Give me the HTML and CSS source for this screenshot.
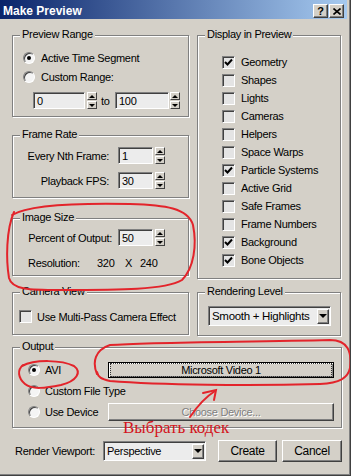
FILE: index.html
```html
<!DOCTYPE html>
<html lang="ru">
<head>
    <meta charset="UTF-8">
    <meta name="viewport" content="width=device-width, initial-scale=1.0">
    <title>Make Preview</title>
    <link rel="stylesheet" href="styles.css">
</head>
<body>
    <div class="window">
        <div class="titlebar">
            <span class="title">Make Preview</span>
            <div class="title-buttons">
                <span class="tbtn">?</span>
                <span class="tbtn">
                    <svg width="8" height="7" viewBox="0 0 8 7"><path d="M0.5 0.5 L7.5 6.5 M7.5 0.5 L0.5 6.5" stroke="#000" stroke-width="1.6" fill="none"/></svg>
                </span>
            </div>
        </div>

        <div class="content">
            <div class="columns">
                <div class="column">
                    <div class="group preview-range">
                        <span class="group-title">Preview Range</span>
                        <div class="radio-row pr-first"><span class="radio checked"></span>Active Time Segment</div>
                        <div class="radio-row"><span class="radio"></span>Custom Range:</div>
                        <div class="range-row">
                            <span class="field range-from">0</span>
                            <span class="spinner"><i class="spin up"></i><i class="spin down"></i></span>
                            <span class="to">to</span>
                            <span class="field range-to">100</span>
                            <span class="spinner"><i class="spin up"></i><i class="spin down"></i></span>
                        </div>
                    </div>

                    <div class="group frame-rate">
                        <span class="group-title">Frame Rate</span>
                        <div class="spin-row fr-first">
                            <span class="spin-label">Every Nth Frame:</span>
                            <span class="field small">1</span>
                            <span class="spinner"><i class="spin up"></i><i class="spin down"></i></span>
                        </div>
                        <div class="spin-row fr-second">
                            <span class="spin-label">Playback FPS:</span>
                            <span class="field small">30</span>
                            <span class="spinner"><i class="spin up"></i><i class="spin down"></i></span>
                        </div>
                    </div>

                    <div class="group image-size">
                        <span class="group-title">Image Size</span>
                        <div class="spin-row is-first">
                            <span class="spin-label wide">Percent of Output:</span>
                            <span class="field small">50</span>
                            <span class="spinner"><i class="spin up"></i><i class="spin down"></i></span>
                        </div>
                        <div class="res-row">
                            <span class="res-label">Resolution:</span>
                            <span class="res-w">320</span>
                            <span class="res-x">X</span>
                            <span>240</span>
                        </div>
                    </div>

                    <div class="group camera-view">
                        <span class="group-title">Camera View</span>
                        <div class="check-row cv-row"><span class="check"></span>Use Multi-Pass Camera Effect</div>
                    </div>
                </div>

                <div class="column">
                    <div class="group display">
                        <span class="group-title">Display in Preview</span>
                        <div class="check-list">
                            <div class="check-row"><span class="check checked"><svg width="9" height="9" viewBox="0 0 9 9"><path d="M1 4 L3.5 6.5 L8 1.5" stroke="#000" stroke-width="2" fill="none"/></svg></span>Geometry</div>
                            <div class="check-row"><span class="check"></span>Shapes</div>
                            <div class="check-row"><span class="check"></span>Lights</div>
                            <div class="check-row"><span class="check"></span>Cameras</div>
                            <div class="check-row"><span class="check"></span>Helpers</div>
                            <div class="check-row"><span class="check"></span>Space Warps</div>
                            <div class="check-row"><span class="check checked"><svg width="9" height="9" viewBox="0 0 9 9"><path d="M1 4 L3.5 6.5 L8 1.5" stroke="#000" stroke-width="2" fill="none"/></svg></span>Particle Systems</div>
                            <div class="check-row"><span class="check"></span>Active Grid</div>
                            <div class="check-row"><span class="check"></span>Safe Frames</div>
                            <div class="check-row"><span class="check"></span>Frame Numbers</div>
                            <div class="check-row"><span class="check checked"><svg width="9" height="9" viewBox="0 0 9 9"><path d="M1 4 L3.5 6.5 L8 1.5" stroke="#000" stroke-width="2" fill="none"/></svg></span>Background</div>
                            <div class="check-row"><span class="check checked"><svg width="9" height="9" viewBox="0 0 9 9"><path d="M1 4 L3.5 6.5 L8 1.5" stroke="#000" stroke-width="2" fill="none"/></svg></span>Bone Objects</div>
                        </div>
                    </div>

                    <div class="group rendering">
                        <span class="group-title">Rendering Level</span>
                        <div class="select level-select">
                            <span class="select-text">Smooth + Highlights</span>
                            <span class="select-arrow"><i class="tri"></i></span>
                        </div>
                    </div>
                </div>
            </div>

            <div class="group output">
                <span class="group-title">Output</span>
                <div class="out-row out-first">
                    <span class="out-choice"><span class="radio checked"></span>AVI</span>
                    <span class="btn default"><span class="focus">Microsoft Video 1</span></span>
                </div>
                <div class="out-row out-second">
                    <span class="out-choice"><span class="radio"></span>Custom File Type</span>
                </div>
                <div class="out-row out-third">
                    <span class="out-choice"><span class="radio"></span>Use Device</span>
                    <span class="btn disabled choose">Choose Device...</span>
                </div>
            </div>

            <div class="bottom-row">
                <span class="viewport-label">Render Viewport:</span>
                <div class="select viewport-select">
                    <span class="select-text">Perspective</span>
                    <span class="select-arrow"><i class="tri"></i></span>
                </div>
                <span class="btn action create">Create</span>
                <span class="btn action cancel">Cancel</span>
            </div>
        </div>

        <svg class="marks" width="351" height="476" viewBox="0 0 351 476">
            <g fill="none" stroke="#e3242b" stroke-width="2" stroke-linecap="round">
                <path d="M12 215 C30 204 80 203 130 204 C165 205 188 208 193 225 C197 245 194 268 182 280 C165 290 120 290 60 290 C30 290 12 290 9 278 C6 260 6 230 14 212"/>
                <path d="M22 366 C35 359 62 360 74 366 C82 372 77 381 61 385 C46 388 32 390 25 384 C18 378 17 370 23 365"/>
                <path d="M97 374 C92 362 95 350 110 345 C150 342 250 342 330 340 C348 340 352 352 350 368 C348 378 340 383 320 384 C250 386 160 385 110 381 C101 379 98 377 97 372"/>
                <path d="M190 417 C196 408 204 398 215 391"/>
                <path d="M203 393 L216 390 L214 400"/>
            </g>
        </svg>
        <span class="note">Выбрать кодек</span>
    </div>
</body>
</html>
```

FILE: styles.css
```css
* {
    box-sizing: border-box;
}

body {
    margin: 0;
    background-color: #d4d0c8;
    font-family: "Liberation Sans", Arial, sans-serif;
    font-size: 11px;
    letter-spacing: -0.3px;
    color: #000;
    white-space: nowrap;
}

.window {
    position: relative;
    width: 351px;
    height: 476px;
    background-color: #d4d0c8;
    border-right: 1px solid #404040;
    border-bottom: 1px solid #404040;
    box-shadow: inset -1px -1px #808080;
    overflow: hidden;
}

/* title bar */

.titlebar {
    display: flex;
    justify-content: space-between;
    height: 19px;
    margin-right: 3px;
    padding: 0 3px 0 3px;
    background: linear-gradient(to right, #0a246a, #a6caf0);
}

.title {
    margin-top: 4px;
    color: #fff;
    font-size: 12px;
    font-weight: bold;
    line-height: 14px;
    letter-spacing: 0;
}

.title-buttons {
    display: flex;
    gap: 1px;
    margin-top: 4px;
}

.tbtn {
    display: flex;
    align-items: center;
    justify-content: center;
    width: 15px;
    height: 14px;
    background-color: #d4d0c8;
    border-top: 1px solid #fff;
    border-left: 1px solid #fff;
    border-right: 1px solid #404040;
    border-bottom: 1px solid #404040;
    box-shadow: inset -1px -1px #808080;
    font-size: 11px;
    font-weight: bold;
    line-height: 11px;
    letter-spacing: 0;
}

/* layout */

.content {
    padding: 16px 8px 0 12px;
}

.columns {
    display: grid;
    grid-template-columns: 177px 144px;
    column-gap: 8px;
    align-items: start;
}

.column {
    display: flex;
    flex-direction: column;
}

.group {
    border: 1px solid #808080;
    box-shadow: inset 1px 1px #fff, 1px 1px #fff;
}

.group-title {
    display: block;
    width: fit-content;
    margin: -8px 0 0 7px;
    padding: 0 2px;
    line-height: 13px;
    background-color: #d4d0c8;
}

.preview-range { height: 82px; }
.frame-rate { height: 63px; margin-top: 18px; }
.image-size { height: 58px; margin-top: 20px; }
.camera-view { height: 43px; margin-top: 16px; }
.display { height: 244px; }
.rendering { height: 44px; margin-top: 13px; }
.output { height: 81px; margin-top: 11px; }

/* radios and checkboxes */

.radio-row {
    display: flex;
    align-items: center;
    height: 19px;
    padding-left: 10px;
}

.pr-first {
    margin-top: 7px;
}

.radio {
    display: flex;
    align-items: center;
    justify-content: center;
    flex: none;
    width: 12px;
    height: 12px;
    margin-right: 6px;
    border-radius: 50%;
    border: 1px solid;
    border-color: #808080 #fff #fff #808080;
    background-color: #f4f4f4;
    box-shadow: inset 1px 1px #404040;
}

.radio.checked::after {
    content: "";
    width: 4px;
    height: 4px;
    border-radius: 50%;
    background-color: #000;
}

.check {
    display: flex;
    align-items: center;
    justify-content: center;
    flex: none;
    width: 13px;
    height: 13px;
    margin-right: 6px;
    border-top: 1px solid #808080;
    border-left: 1px solid #808080;
    border-right: 1px solid #fff;
    border-bottom: 1px solid #fff;
    background-color: #e4e4e4;
    box-shadow: inset 1px 1px #404040;
}

.check-row {
    display: flex;
    align-items: center;
    height: 18px;
}

.check-list {
    margin-top: 12px;
    padding-left: 24px;
}

.cv-row {
    height: 17px;
    margin-top: 10px;
    padding-left: 6px;
}

.cv-row .check {
    margin-right: 5px;
}

/* fields and spinners */

.field {
    display: flex;
    align-items: center;
    height: 17px;
    padding-left: 3px;
    background-color: #ececec;
    border-top: 1px solid #808080;
    border-left: 1px solid #808080;
    border-right: 1px solid #fff;
    border-bottom: 1px solid #fff;
    box-shadow: inset 1px 1px #404040;
}

.spinner {
    display: flex;
    flex-direction: column;
    gap: 1px;
    width: 10px;
    height: 17px;
}

.spin {
    display: flex;
    align-items: center;
    justify-content: center;
    flex: 1;
    background-color: #d4d0c8;
    border-top: 1px solid #fff;
    border-left: 1px solid #fff;
    border-right: 1px solid #404040;
    border-bottom: 1px solid #404040;
}

.spin::after {
    content: "";
    border-left: 3px solid transparent;
    border-right: 3px solid transparent;
}

.spin.up::after {
    border-bottom: 3px solid #000;
}

.spin.down::after {
    border-top: 3px solid #000;
}

.range-row {
    display: flex;
    align-items: center;
    margin-top: 6px;
    padding-left: 20px;
}

.range-from {
    width: 52px;
    margin-right: 2px;
}

.to {
    width: 14px;
    margin-left: 4px;
}

.range-to {
    width: 54px;
    margin-right: 1px;
}

.spin-row {
    display: flex;
    align-items: center;
    height: 17px;
}

.spin-label {
    width: 96px;
    margin-right: 9px;
    text-align: right;
}

.spin-label.wide {
    width: 99px;
    margin-right: 6px;
}

.field.small {
    width: 35px;
    margin-right: 2px;
}

.fr-first { margin-top: 6px; }
.fr-second { margin-top: 8px; }
.is-first { margin-top: 5px; }

.res-row {
    display: flex;
    align-items: center;
    height: 17px;
    margin-top: 8px;
    padding-left: 15px;
}

.res-label { width: 69px; }
.res-w { width: 28px; }
.res-x { width: 15px; }

/* dropdowns */

.select {
    display: flex;
    align-items: center;
    justify-content: space-between;
    height: 20px;
    padding: 0 1px 0 3px;
    background-color: #ececec;
    border-top: 1px solid #808080;
    border-left: 1px solid #808080;
    border-right: 1px solid #fff;
    border-bottom: 1px solid #fff;
    box-shadow: inset 1px 1px #404040;
}

.select-arrow {
    display: flex;
    align-items: center;
    justify-content: center;
    width: 12px;
    height: 15px;
    background-color: #d4d0c8;
    border-top: 1px solid #fff;
    border-left: 1px solid #fff;
    border-right: 1px solid #404040;
    border-bottom: 1px solid #404040;
    box-shadow: inset -1px -1px #808080;
}

.tri {
    border-left: 4px solid transparent;
    border-right: 4px solid transparent;
    border-top: 4px solid #000;
}

.level-select {
    width: 123px;
    margin: 8px 0 0 10px;
    font-size: 11.5px;
}

.viewport-select {
    width: 103px;
    height: 20px;
}

/* buttons */

.btn {
    display: flex;
    align-items: center;
    justify-content: center;
    background-color: #d4d0c8;
    border-top: 1px solid #fff;
    border-left: 1px solid #fff;
    border-right: 1px solid #404040;
    border-bottom: 1px solid #404040;
    box-shadow: inset -1px -1px #808080;
}

.btn.default {
    width: 226px;
    height: 16px;
    border: 1px solid #000;
    box-shadow: inset 1px 1px #fff, inset -1px -1px #808080;
}

.focus {
    display: flex;
    align-items: center;
    justify-content: center;
    width: 100%;
    height: 100%;
    margin: 1px;
    border: 1px dotted #333;
    line-height: 10px;
}

.btn.disabled {
    color: #808080;
    text-shadow: 1px 1px #fff;
}

.choose {
    width: 226px;
    height: 18px;
}

.out-row {
    display: flex;
    align-items: center;
}

.out-first { height: 20px; margin-top: 7px; }
.out-second { height: 21px; }
.out-third { height: 21px; }

.out-choice {
    display: flex;
    align-items: center;
    flex: none;
    width: 95px;
    padding-left: 15px;
}

.out-choice .radio {
    margin-right: 5px;
}

.bottom-row {
    display: flex;
    align-items: center;
    height: 22px;
    margin-top: 12px;
}

.viewport-label {
    width: 91px;
    padding-left: 3px;
}

.action {
    height: 22px;
    font-size: 12px;
}

.create {
    width: 59px;
    margin-left: 12px;
}

.cancel {
    width: 60px;
    margin-left: 5px;
}

/* red annotations drawn over the dialog */

.marks {
    position: absolute;
    top: 0;
    left: 0;
    pointer-events: none;
}

.note {
    position: absolute;
    left: 123px;
    top: 419px;
    color: #d3141c;
    font-family: "Liberation Serif", "Times New Roman", serif;
    font-size: 17px;
    line-height: 17px;
    letter-spacing: 0;
}
```
